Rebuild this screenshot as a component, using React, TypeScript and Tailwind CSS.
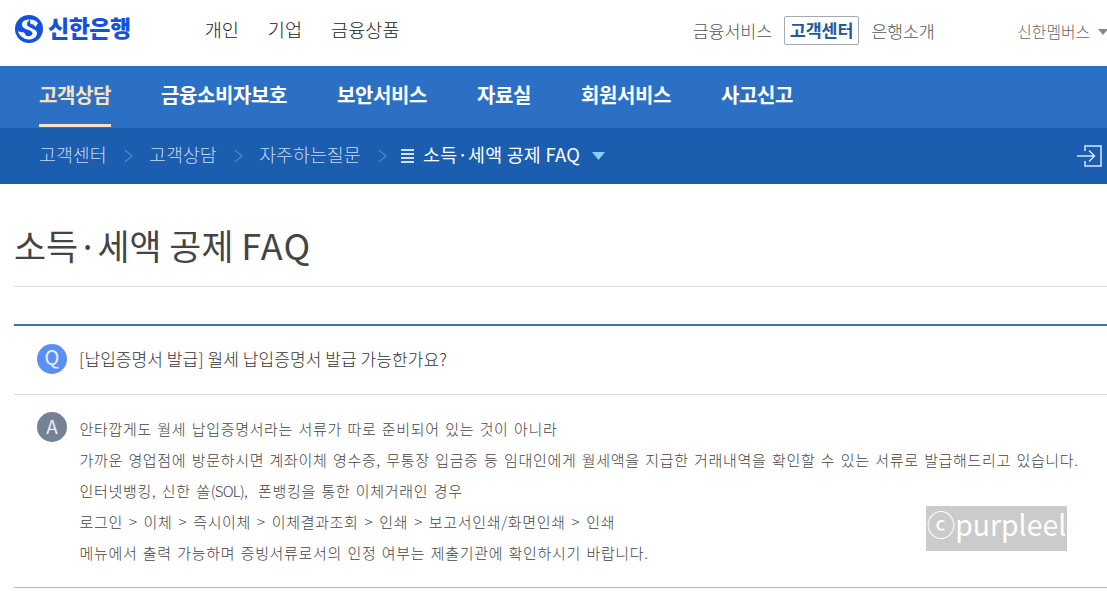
const topMenu = ["개인", "기업", "금융상품"];

const navItems = ["고객상담", "금융소비자보호", "보안서비스", "자료실", "회원서비스", "사고신고"];

const crumbs = ["고객센터", "고객상담", "자주하는질문"];

const Logo = () => (
  <a href="#" className="flex items-center gap-[5px] text-[#1550e0]">
    <svg width="28" height="28" viewBox="0 0 28 28" aria-hidden="true">
      <circle cx="14" cy="14" r="14" fill="#1550e0" />
      <path d="M15 4.500C9 4 5.500 8 7.500 11.500C9.500 15 16.500 14.500 17.500 18C18 21 13.500 22 10.500 20.500C8 19.300 6.500 17.500 3 16.500C4.500 21 9.500 25 14.500 24.500C20 24 23.500 20 21.500 16.500C19.500 13 12.500 13 12 9.500C11.800 7 13.500 6 15 4.500Z" fill="#fff" />
      <path d="M15 4.500C18 4.500 21 5.500 23 8L20.500 12L18.500 9.500L15.500 9ZM3 16.500L9 17.500L11 20.500L7.500 22Z" fill="#fff" />
    </svg>
    <span className="pb-1 text-[23px] leading-6 font-black tracking-[-0.5px]">신한은행</span>
  </a>
);

const Header = () => (
  <header className="flex h-[66px] items-center pl-[15px] pb-2 whitespace-nowrap">
    <Logo />
    <nav className="ml-[74px] flex gap-[29px] text-[18.6px] font-light text-[#222]">
      {topMenu.map((item) => (
        <a key={item} href="#">{item}</a>
      ))}
    </nav>
    <div className="mt-1 ml-auto flex items-center text-[17.4px] font-light tracking-[-0.1px] text-[#555]">
      <a href="#">금융서비스</a>
      <a href="#" className="mx-3 -mt-px flex h-[29px] w-[75px] items-center justify-center border border-[#a5a9b0] rounded-[2px] font-bold text-[#23589f]">
        고객센터
      </a>
      <a href="#">은행소개</a>
    </div>
    <a href="#" className="mt-[5px] ml-[82.6px] flex items-center gap-2 text-[15.8px] font-light text-[#666]">
      신한멤버스
      <svg width="9" height="6" viewBox="0 0 9 6" aria-hidden="true">
        <path d="M0 0H10L5 6Z" fill="#888" />
      </svg>
    </a>
  </header>
);

const MainNav = () => (
  <nav className="flex h-[62px] gap-[50px] bg-[#2c70c5] pl-[39px] whitespace-nowrap">
    {navItems.map((item, i) => (
      <a
        key={item}
        href="#"
        className={`h-[61px] text-[20px] leading-[57px] font-bold tracking-[-0.4px] ${i === 0 ? "border-b-3 border-[#f5e3c3] text-[#fbe3bd]" : "text-white"}`}
      >
        {item}
      </a>
    ))}
  </nav>
);

const Breadcrumb = () => (
  <div className="flex h-14 items-center bg-[#1b5dae] pl-[39px] pr-[5px] text-[18.4px] whitespace-nowrap text-[#c3daf5]">
    {crumbs.map((crumb) => (
      <div key={crumb} className="flex items-center">
        <a href="#" className="pb-0.5 font-light">{crumb}</a>
        <svg width="42.4" height="16" viewBox="0 0 42.4 16" fill="none" aria-hidden="true">
          <path d="M18 2L25 8L18 14" stroke="#4384cf" strokeWidth="1.500" />
        </svg>
      </div>
    ))}
    <svg className="-ml-0.5" width="14" height="14" viewBox="0 0 14 14" stroke="#cfe2fa" strokeWidth="2" aria-hidden="true">
      <path d="M0 1H13M0 5H13M0 9H13M0 13H13" />
    </svg>
    <a href="#" className="ml-2 pb-0.5 tracking-[0.25px] text-white">소득·세액 공제 FAQ</a>
    <svg className="ml-3" width="13" height="8" viewBox="0 0 13 8" aria-hidden="true">
      <path d="M0 0H13L6.500 8Z" fill="#84d0ff" />
    </svg>
    <svg className="ml-auto" width="25" height="22" viewBox="0 0 25 22" fill="none" stroke="#d5e6fa" strokeWidth="1.500" aria-hidden="true">
      <path d="M8 6V1H24V21H8V16M0 11H17M12 5.500L17.500 11L12 16.500" />
    </svg>
  </div>
);

const Faq = () => (
  <section className="mt-[37px] border-t-2 border-b border-t-[#3f74b8] border-b-[#b5b5b5] whitespace-nowrap">
    {/* Question */}
    <div className="flex h-[69px] items-center border-b border-[#ddd] pb-0.5 pl-[23px]">
      <span className="flex size-[30px] items-center justify-center rounded-full bg-[#5c8ff5] pb-1 text-[20px] leading-none text-[#e8f0ff]">Q</span>
      <p className="ml-3 text-[17px] font-light tracking-[0.08px] text-[#333]">[납입증명서 발급] 월세 납입증명서 발급 가능한가요?</p>
    </div>
    {/* Answer */}
    <div className="flex h-[192px] pt-[17px] pl-[23px]">
      <span className="flex size-[30px] items-center justify-center rounded-full bg-[#758195] pb-1 text-[19px] leading-none text-[#e8edf5]">A</span>
      <div className="ml-[12.5px] pt-px text-[15px] leading-[31px] font-light tracking-[0.67px] text-[#444] [word-spacing:1.5px]">
        <p>안타깝게도 월세 납입증명서라는 서류가 따로 준비되어 있는 것이 아니라</p>
        <p>가까운 영업점에 방문하시면 계좌이체 영수증, 무통장 입금증 등 임대인에게 월세액을 지급한 거래내역을 확인할 수 있는 서류로 발급해드리고 있습니다.</p>
        <p>인터넷뱅킹, 신한 쏠<span className="tracking-[-0.7px]">(SOL),</span>&nbsp; 폰뱅킹을 통한 이체거래인 경우</p>
        <p className="[word-spacing:2px]">로그인 &gt; 이체 &gt; 즉시이체 &gt; 이체결과조회 &gt; 인쇄 &gt; 보고서인쇄/화면인쇄 &gt; 인쇄</p>
        <p>메뉴에서 출력 가능하며 증빙서류로서의 인정 여부는 제출기관에 확인하시기 바랍니다.</p>
      </div>
    </div>
  </section>
);

const App = () => {
  return (
    <div className="relative h-[591px] w-[1107px] overflow-hidden bg-white font-['Noto_Sans_CJK_KR',sans-serif]">
      <Header />
      <MainNav />
      <Breadcrumb />

      <main className="pl-[14px]">
        <h1 className="h-[103px] border-b border-[#ddd] pt-[35px] text-[34.8px] leading-[52px] whitespace-nowrap text-[#444]">
          소득·세액 공제 <span className="text-[36px] leading-none tracking-[1.2px]">FAQ</span>
        </h1>
        <Faq />
      </main>

      {/* Watermark */}
      <div className="absolute top-[506px] left-[926px] flex h-[45px] w-[141px] items-center justify-center bg-[#cbcbcb] pb-2 text-[28.4px] leading-none whitespace-nowrap text-white">
        ⓒpurpleel
      </div>
    </div>
  );
};

export default App;
